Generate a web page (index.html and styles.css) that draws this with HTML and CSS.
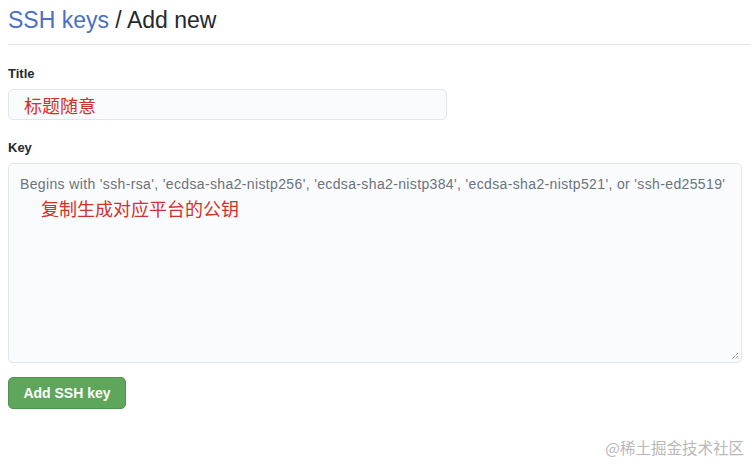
FILE: index.html
```html
<!DOCTYPE html>
<html>
<head>
<meta charset="utf-8">
<link rel="stylesheet" href="styles.css">
</head>
<body>
<div class="page">
  <h1 class="heading"><a class="crumb" href="#">SSH keys</a> / Add new</h1>
  <form class="form">
    <div class="group">
      <label class="label">Title</label>
      <div class="input"><span class="note note-title">标题随意</span></div>
    </div>
    <div class="group group-key">
      <label class="label">Key</label>
      <div class="textarea">
        <div class="placeholder">Begins with 'ssh-rsa', 'ecdsa-sha2-nistp256', 'ecdsa-sha2-nistp384', 'ecdsa-sha2-nistp521', or 'ssh-ed25519'</div>
        <div class="note note-key">复制生成对应平台的公钥</div>
        <svg class="grip" width="8" height="8" viewBox="0 0 8 8"><path d="M7 1 L1 7 M7 4 L4 7 M7 6.5 L6.5 7" stroke="#555" stroke-width="1" stroke-dasharray="1 1"/></svg>
      </div>
    </div>
    <div class="actions"><button type="button" class="btn">Add SSH key</button></div>
  </form>
  <div class="watermark">@稀土掘金技术社区</div>
</div>
</body>
</html>
```
FILE: styles.css
```css
html, body { margin: 0; padding: 0; background: #fff; }
body { font-family: "Liberation Sans", Arial, "Noto Sans CJK SC", sans-serif; color: #24292e; width: 750px; height: 464px; overflow: hidden; }
.page { padding: 0 8px; position: relative; height: 464px; box-sizing: border-box; }
.heading { margin: 0; padding: 6px 0 10px; font-size: 23px; font-weight: 400; line-height: 28px; border-bottom: 1px solid #e1e4e8; margin-right: -8px; }
.crumb { color: #4a6fc5; text-decoration: none; }
.form { padding-top: 21px; }
.group { margin-bottom: 20px; }
.group-key { margin-bottom: 14px; }
.label { display: block; font-size: 13px; font-weight: 700; line-height: 16px; margin-bottom: 7px; color: #24292e; }
.input { width: 439px; height: 31px; box-sizing: border-box; border: 1px solid #e1e4e8; border-radius: 5px; background: #fafbfc; display: flex; align-items: center; padding-left: 15px; }
.note { color: #d0312d; font-family: "Noto Sans CJK SC", sans-serif; font-size: 18px; }
.note-title { line-height: 22px; }
.textarea { position: relative; width: 734px; height: 200px; box-sizing: border-box; border: 1px solid #e1e4e8; border-radius: 5px; background: #fafbfc; padding: 12px 11px; }
.placeholder { font-size: 14px; color: #6a737d; line-height: 17px; white-space: nowrap; letter-spacing: 0.36px; }
.note-key { margin-top: 3px; padding-left: 21px; line-height: 24px; }
.grip { position: absolute; right: 2px; bottom: 2px; }
.btn { width: 118px; height: 32px; border: 1px solid #4c944a; border-radius: 5px; background: #5ea65b; color: #fff; font-family: "Liberation Sans", Arial, sans-serif; font-weight: 700; font-size: 14px; padding: 0; margin-top: 1px; display: block; }
.watermark { position: absolute; right: 6px; bottom: 7px; font-family: "Noto Sans CJK SC", sans-serif; font-size: 15.5px; line-height: 20px; color: #b8b8b8; }
```
